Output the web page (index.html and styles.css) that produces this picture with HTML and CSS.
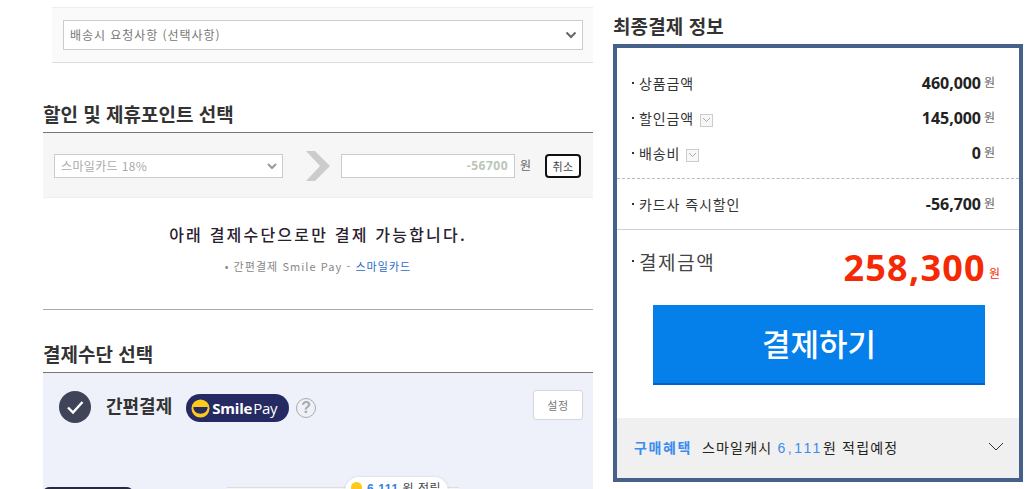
FILE: index.html
```html
<!DOCTYPE html>
<html lang="ko">
<head>
<meta charset="utf-8">
<title>최종결제 정보</title>
<link rel="stylesheet" href="styles.css">
</head>
<body>
<div class="page">
  <main class="main">
    <div class="delivery">
      <div class="select select-delivery"><span class="select-text">배송시 요청사항 (선택사항)</span>
        <svg class="caret" width="12" height="8" viewBox="0 0 12 8"><path d="M1.5 1.5 6 6l4.500-4.500" fill="none" stroke="#666" stroke-width="2"/></svg>
      </div>
    </div>

    <h2 class="title">할인 및 제휴포인트 선택</h2>
    <div class="discount">
      <div class="select select-card"><span class="select-text">스마일카드 18%</span>
        <svg class="caret" width="10" height="7" viewBox="0 0 10 7"><path d="M1 1l4 4 4-4" fill="none" stroke="#999" stroke-width="2"/></svg>
      </div>
      <svg class="arrow" width="24" height="30" viewBox="0 0 24 30"><path d="M0 0h9l15 15L9 30H0l14-15z" fill="#ccc"/></svg>
      <div class="amount">-56700</div>
      <span class="unit-won">원</span>
      <button class="cancel" type="button">취소</button>
    </div>

    <div class="notice">
      <p class="notice-main">아래 결제수단으로만 결제 가능합니다.</p>
      <p class="notice-sub">• 간편결제 Smile Pay - <a class="notice-link">스마일카드</a></p>
    </div>

    <h2 class="title title-pay">결제수단 선택</h2>
    <section class="pay">
      <div class="pay-head">
        <svg class="check" width="32" height="32" viewBox="0 0 32 32"><circle cx="16" cy="16" r="16" fill="#3f4459"/><path d="M9 16.500l5 5L23.500 11" fill="none" stroke="#fff" stroke-width="2.400"/></svg>
        <strong class="pay-name">간편결제</strong>
        <span class="smile">
          <svg width="19" height="19" viewBox="0 0 20 20"><circle cx="10" cy="10" r="9.500" fill="#fdc91a"/><path d="M2.500 8.500h15C17.500 13 14 15.500 10 15.500S2.500 13 2.500 8.500z" fill="#262a63"/></svg>
          <b class="smile-a">Smile</b><span class="smile-b">Pay</span>
        </span>
        <span class="help">?</span>
        <button class="setting" type="button">설정</button>
      </div>
      <div class="cards">
        <div class="card-dark"></div>
        <div class="card-light"></div>
      </div>
      <div class="tip"><i class="coin"></i><b class="tip-num">6,111</b> 원 적립</div>
    </section>
  </main>

  <aside class="side">
    <h2 class="side-title">최종결제 정보</h2>
    <div class="summary">
      <ul class="rows">
        <li class="row"><span class="label">상품금액</span><span class="val"><b>460,000</b><i>원</i></span></li>
        <li class="row"><span class="label">할인금액<span class="drop"><svg width="9" height="6" viewBox="0 0 9 6"><path d="M1 1l3.500 3.500L8 1" fill="none" stroke="#aaa"/></svg></span></span><span class="val"><b>145,000</b><i>원</i></span></li>
        <li class="row"><span class="label">배송비<span class="drop"><svg width="9" height="6" viewBox="0 0 9 6"><path d="M1 1l3.500 3.500L8 1" fill="none" stroke="#aaa"/></svg></span></span><span class="val"><b>0</b><i>원</i></span></li>
      </ul>
      <ul class="rows rows-card">
        <li class="row"><span class="label">카드사 즉시할인</span><span class="val"><b>-56,700</b><i>원</i></span></li>
      </ul>
      <div class="total">
        <span class="total-label">결제금액</span>
        <span class="total-val"><b>258,300</b><i>원</i></span>
      </div>
      <button class="pay-btn" type="button">결제하기</button>
      <div class="benefit">
        <b class="benefit-head">구매혜택</b>
        <span class="benefit-text">스마일캐시 <em>6,111</em>원 적립예정</span>
        <svg class="benefit-caret" width="16" height="9" viewBox="0 0 16 9"><path d="M1 1l7 7 7-7" fill="none" stroke="#333"/></svg>
      </div>
    </div>
  </aside>
</div>
</body>
</html>
```

FILE: styles.css
```css
* { box-sizing: border-box; }
html, body { margin: 0; padding: 0; height: 489px; overflow: hidden; background: #fff; }
body { font-family: "Noto Sans CJK KR", "Liberation Sans", sans-serif; color: #222; }
ul, p, h2 { margin: 0; padding: 0; list-style: none; }
button { font-family: inherit; padding: 0; cursor: pointer; }

.page { display: flex; align-items: flex-start; padding-left: 43px; gap: 20px; height: 489px; overflow: hidden; }

.main { width: 550px; flex: none; padding-top: 7px; height: 489px; }

.delivery { margin-left: 9px; background: #fafafa; border-top: 1px solid #eee; border-bottom: 1px solid #ddd; padding: 12px 10px 12px 11px; }
.select { display: flex; align-items: center; justify-content: space-between; background: #fff; border: 1px solid #ccc; font-size: 12px; color: #777; }
.select-text { margin-top: -2px; }
.select-delivery { height: 30px; padding: 0 5px 0 6px; letter-spacing: .95px; }
.select-card { width: 229px; height: 24px; padding: 0 5px 0 6px; color: #aaa; letter-spacing: .35px; }

.title { font-size: 19px; font-weight: 700; line-height: 26px; color: #333; letter-spacing: 0; margin-top: 38px; padding-bottom: 5px; border-bottom: 1px solid #777; }
.title-pay { margin-top: 31px; }

.discount { display: flex; align-items: center; height: 65px; background: #f6f6f6; border-bottom: 1px solid #eee; padding: 2px 0 0 11px; }
.arrow { margin: -1px 0 0 23px; }
.amount { width: 174px; height: 24px; margin-left: 11px; padding-right: 6px; background: #fff; border: 1px solid #ccc; text-align: right; font: 700 12px/22px "Open Sans", sans-serif; color: #b9c6b8; letter-spacing: .5px; }
.unit-won { font-size: 12px; color: #666; margin-left: 5px; margin-top: -3px; }
.cancel { width: 36px; height: 24px; margin-left: 14px; border: 2px solid #111; border-radius: 4px; background: #fff; font-size: 11px; color: #444; letter-spacing: .5px; }

.notice { height: 112px; border-bottom: 1px solid #aaa; text-align: center; padding-top: 25px; }
.notice-main { font-size: 16px; line-height: 22px; font-weight: 500; color: #2a2030; letter-spacing: 2.2px; }
.notice-sub { margin-top: 11px; font-size: 11px; line-height: 20px; color: #888; letter-spacing: 1.05px; }
.notice-link { color: #2a6bc8; }

.pay { position: relative; height: 116px; background: #eef1f9; overflow: hidden; }
.pay-head { display: flex; align-items: flex-start; padding: 17px 10px 0 16px; height: 50px; }
.check { margin-top: 1px; flex: none; }
.pay-name { margin-left: 15px; margin-top: 2px; font-size: 18px; line-height: 26px; font-weight: 700; color: #333; letter-spacing: 0; }
.smile { display: flex; align-items: center; width: 103px; height: 28px; margin-left: 14px; margin-top: 4px; padding-left: 5px; border-radius: 14px; background: #262a63; color: #fff; font-family: "Open Sans", sans-serif; font-size: 15px; line-height: 28px; }
.smile-a { margin-left: 2px; font-weight: 700; letter-spacing: -.2px; }
.smile-b { margin-left: 1px; font-weight: 400; letter-spacing: -.3px; }
.help { display: flex; align-items: center; justify-content: center; width: 20px; height: 20px; margin: 8px 0 0 7px; border: 1px solid #aaa; border-radius: 50%; font: 700 16px/1 "Liberation Sans", sans-serif; color: #aaa; }
.setting { width: 50px; height: 30px; margin-left: auto; background: #fff; border: 1px solid #d6d6da; border-radius: 3px; font-size: 11px; color: #777; letter-spacing: .6px; }

.cards { display: flex; margin-top: 64px; }
.card-dark { width: 90px; height: 20px; background: #262a40; border-radius: 6px 6px 0 0; }
.card-light { width: 232px; height: 20px; margin-left: 94px; background: #f6f6f6; border-top: 1px solid #ddd; }
.tip { position: absolute; left: 302px; top: 104px; width: 103px; height: 30px; padding-left: 22px; background: #fff; border-radius: 14px; box-shadow: 0 0 3px rgba(0,0,0,.12); font-size: 12px; line-height: 21px; color: #444; letter-spacing: .5px; white-space: nowrap; }
.coin { position: absolute; left: 6px; top: 5px; width: 11px; height: 11px; border-radius: 50%; background: #fdc91a; }
.tip-num { color: #3b82e0; font-family: "Liberation Sans", sans-serif; letter-spacing: .6px; }

.side { width: 410px; flex: none; padding-top: 13px; }
.side-title { font-size: 19px; font-weight: 700; line-height: 26px; color: #333; letter-spacing: .1px; margin-bottom: 5px; }
.summary { height: 438px; border: 4px solid #46608c; display: flex; flex-direction: column; }

.rows { padding: 17px 24px 7px 15px; border-bottom: 1px dashed #bbb; height: 131px; }
.rows-card { padding-top: 7px; padding-bottom: 7px; height: 51px; border-bottom: 1px solid #c9d2de; }
.row { display: flex; align-items: center; justify-content: space-between; height: 35px; }
.label { display: flex; align-items: center; font-size: 14px; color: #333; letter-spacing: .9px; }
.label::before { content: ""; width: 2px; height: 2px; margin-right: 5px; background: #333; }
.drop { display: flex; align-items: center; justify-content: center; width: 13px; height: 13px; margin: 5px 0 0 6px; border: 1px solid #ccc; background: #f7f7f7; }
.val { display: flex; align-items: center; }
.val b { font: 700 16px/1 "Open Sans", sans-serif; color: #222; letter-spacing: -.05px; }
.val i { font-style: normal; font-size: 12px; color: #666; margin-left: 3px; margin-top: -2px; }

.total { display: flex; justify-content: space-between; padding: 0 19px 0 15px; height: 75px; }
.total-label { display: flex; align-items: center; height: 62px; font-size: 19px; color: #444; letter-spacing: 1.6px; }
.total-label::before { content: ""; width: 2px; height: 2px; margin-right: 5px; background: #333; }
.total-val { display: flex; align-items: center; height: 76px; color: #f52a05; }
.total-val b { font: 700 36px/1 "Open Sans", sans-serif; letter-spacing: 1.25px; }
.total-val i { font-style: normal; font-size: 12px; margin-left: 3px; margin-top: 9px; }

.pay-btn { display: block; width: 332px; height: 80px; margin-left: 36px; padding-bottom: 3px; background: #0580ea; border: 0; border-bottom: 2px solid #0463c4; color: #fff; font-size: 31px; font-weight: 500; letter-spacing: 0; }

.benefit { display: flex; align-items: center; height: 60px; margin-top: auto; padding: 0 15px 3px 17px; background: #f0f0f0; font-size: 14px; color: #222; }
.benefit-head { color: #3b8cee; font-weight: 700; letter-spacing: 1.6px; }
.benefit-text { margin-left: 10px; letter-spacing: 1.2px; }
.benefit-text em { font-style: normal; color: #3b8cee; letter-spacing: 2.5px; font-family: "Liberation Sans", sans-serif; }
.benefit-caret { margin-left: auto; }
```
